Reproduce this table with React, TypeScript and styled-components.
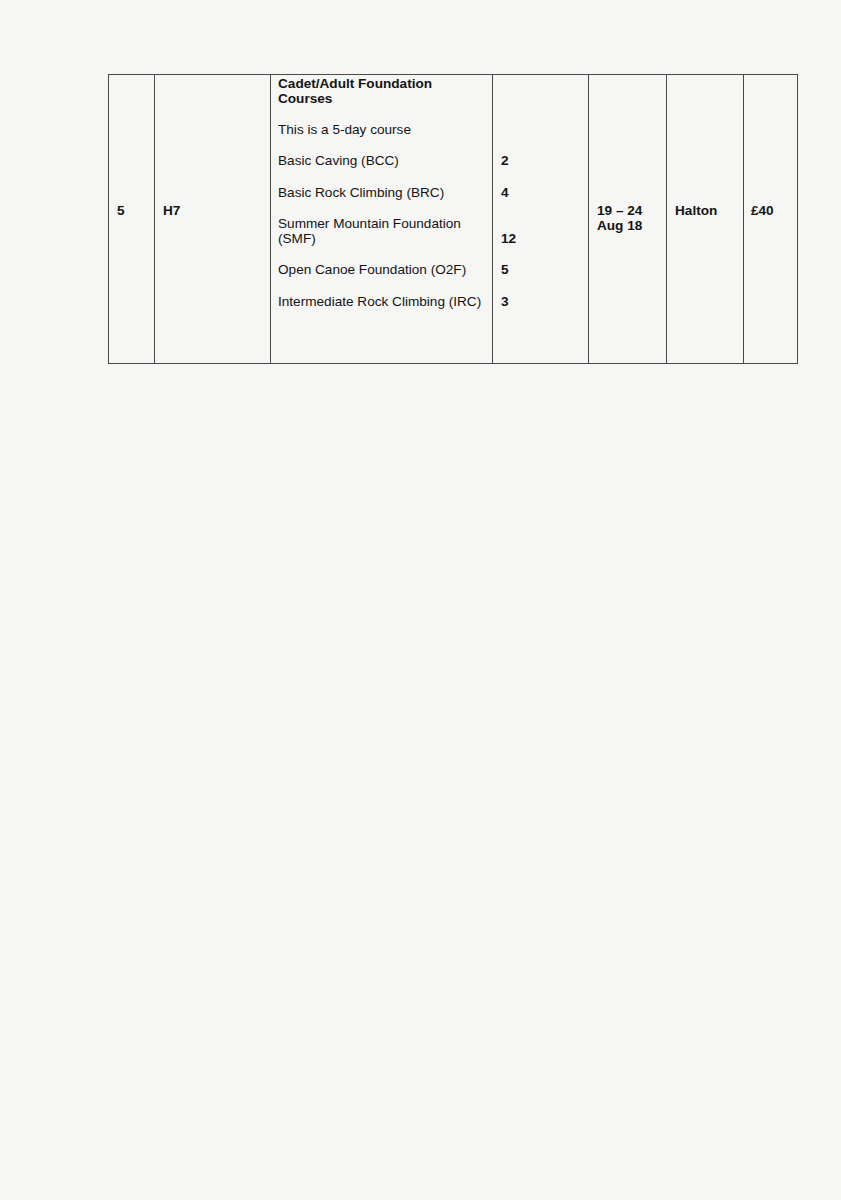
import styled, { createGlobalStyle } from "styled-components";

const GlobalStyle = createGlobalStyle`
    html, body {
        margin: 0;
        padding: 0;
        background: #f6f6f5;
    }
    body {
        font-family: "Liberation Sans", Arial, sans-serif;
        color: #141414;
        min-height: 1200px;
    }
`

type Course = {
    name: string;
    extra?: string;
    places: string;
};

const courses: Course[] = [
    {name: "Basic Caving (BCC)", places: "2"},
    {name: "Basic Rock Climbing (BRC)", places: "4"},
    {name: "Summer Mountain Foundation", extra: "(SMF)", places: "12"},
    {name: "Open Canoe Foundation (O2F)", places: "5"},
    {name: "Intermediate Rock Climbing (IRC)", places: "3"},
];

const colWidths = [46, 116, 222, 96, 78, 77, 54];

const App = () => {
    return <>
        <GlobalStyle/>
        <Page>
            <CourseTable>
                <colgroup>
                    {colWidths.map((w, i) => <col key={i} style={{width: w}}/>)}
                </colgroup>
                <tbody>
                <tr>
                    <Cell $top={127.5}><Bold>5</Bold></Cell>
                    <Cell $top={127.5}><Bold>H7</Bold></Cell>
                    <Cell $top={0.5} $left={7}>
                        <Para><Bold>Cadet/Adult Foundation<br/>Courses</Bold></Para>
                        <Para>This is a 5-day course</Para>
                        {courses.map((c) => (
                            <Para key={c.name}>
                                {c.name}
                                {c.extra && <><br/>{c.extra}</>}
                            </Para>
                        ))}
                    </Cell>
                    <Cell $top={78.4}>
                        {courses.map((c) => (
                            <Para key={c.name}>
                                <Bold>
                                    {c.extra && <br/>}
                                    {c.places}
                                </Bold>
                            </Para>
                        ))}
                    </Cell>
                    <Cell $top={127.5}><Bold>19 – 24<br/>Aug 18</Bold></Cell>
                    <Cell $top={127.5}><Bold>Halton</Bold></Cell>
                    <Cell $top={127.5} $left={7}><Bold>£40</Bold></Cell>
                </tr>
                </tbody>
            </CourseTable>
        </Page>
    </>
}

const Page = styled.div`
    padding: 74px 0 0 108px;
`

const CourseTable = styled.table`
    border-collapse: collapse;
    table-layout: fixed;
    width: 689px;
    height: 290px;
    font-size: 13.6px;
    line-height: 15.5px;
`

const Cell = styled.td<{ $top: number; $left?: number }>`
    border: 1px solid #4a4a4a;
    vertical-align: top;
    padding: ${(p) => p.$top}px 4px 0 ${(p) => p.$left ?? 8}px;
    box-sizing: border-box;
`

const Para = styled.p`
    margin: 0 0 15.7px 0;
`

const Bold = styled.span`
    font-weight: bold;
`

export default App;
